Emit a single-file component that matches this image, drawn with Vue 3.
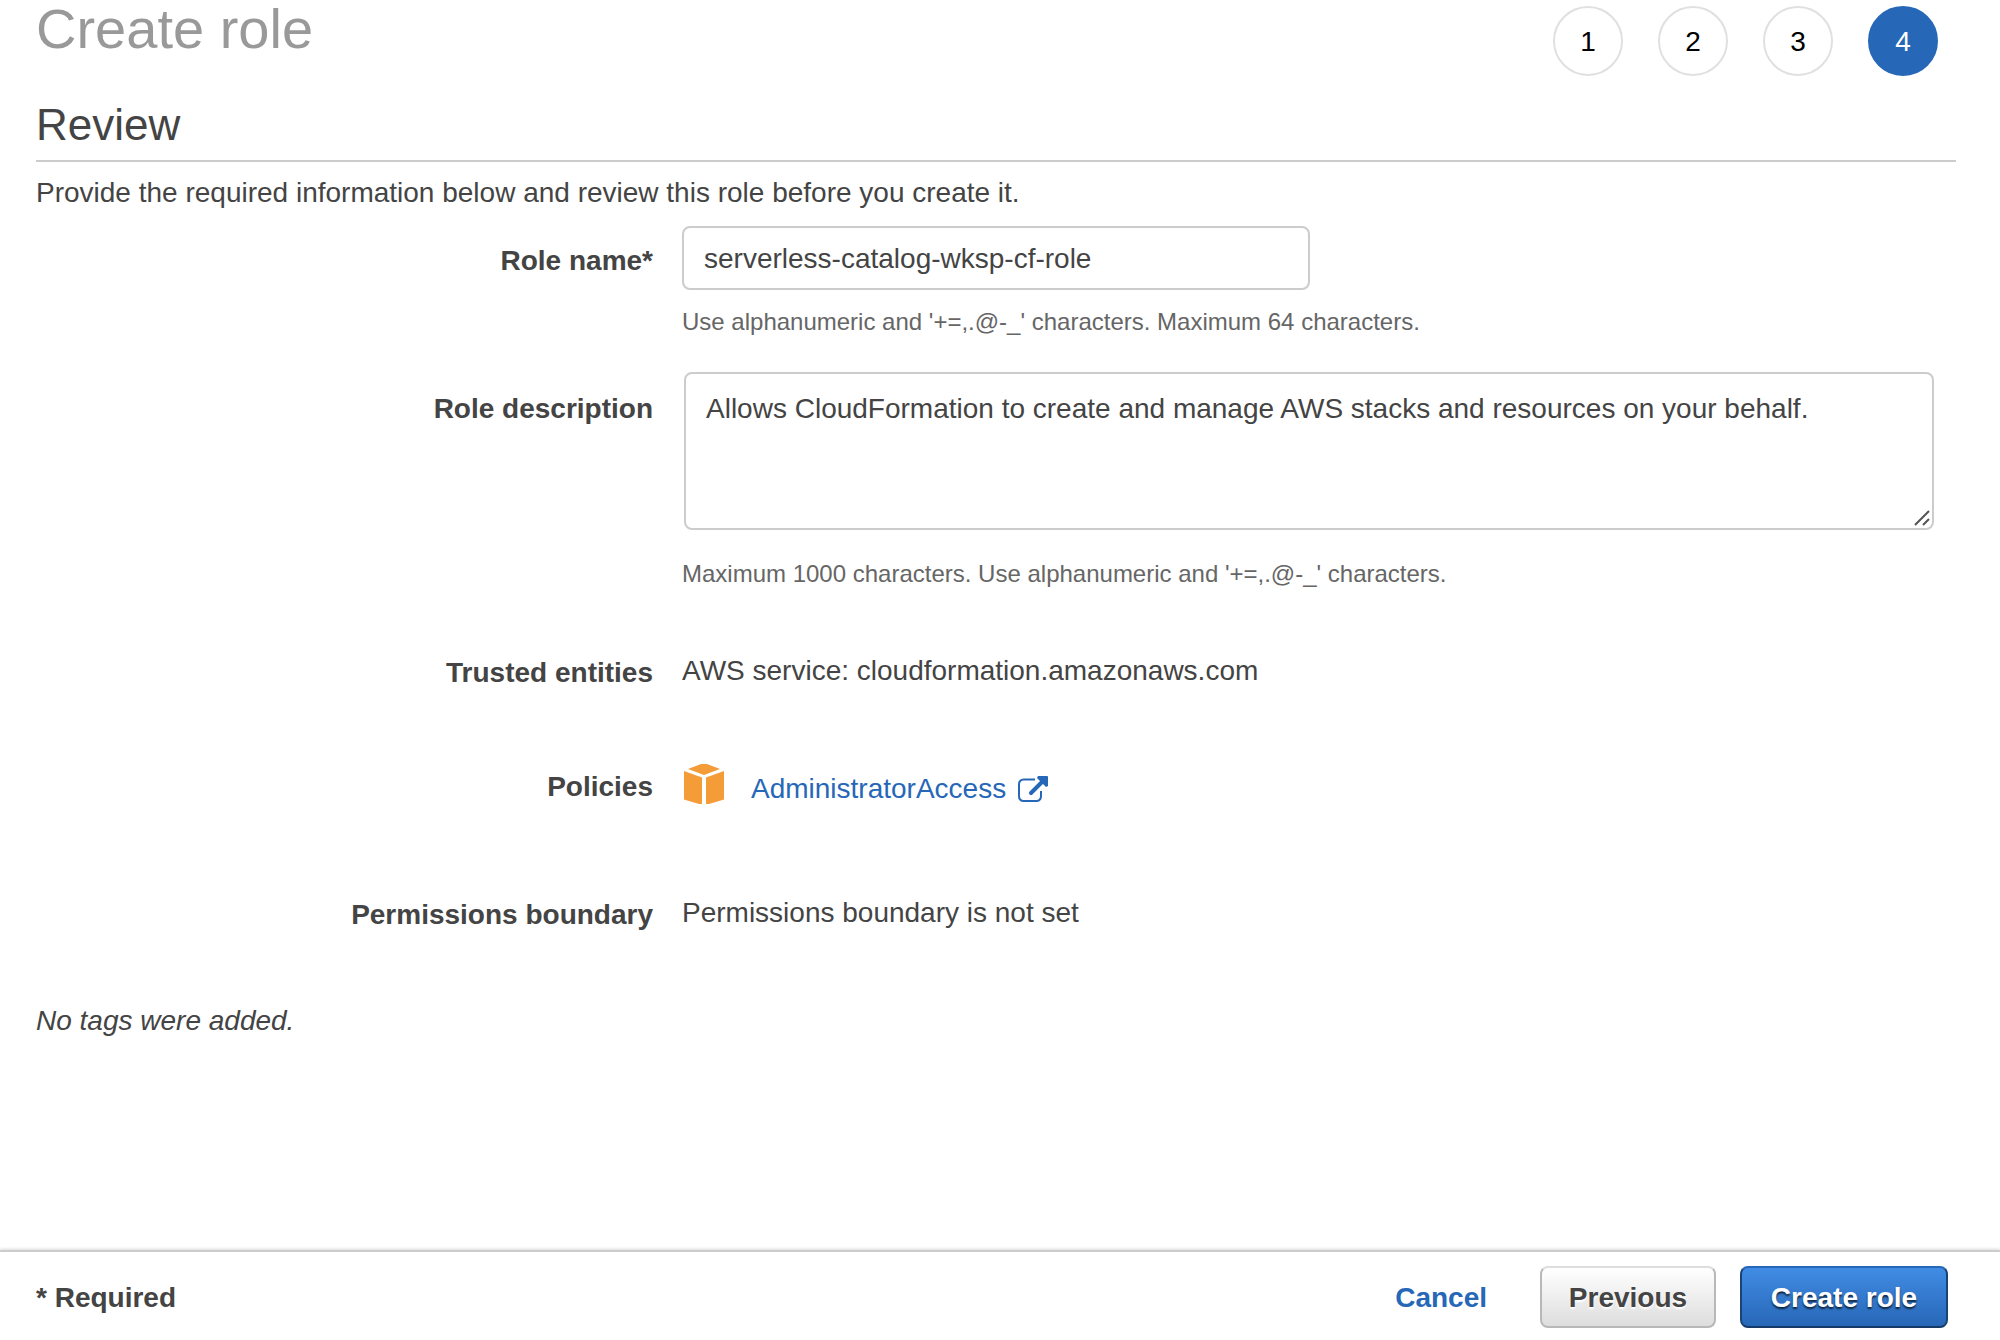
<script setup>
import { ref } from 'vue'

const steps = [1, 2, 3, 4]
const currentStep = ref(4)
const roleName = ref('serverless-catalog-wksp-cf-role')
const roleDescription = ref(
  'Allows CloudFormation to create and manage AWS stacks and resources on your behalf.'
)
</script>

<template>
  <form class="wizard" @submit.prevent>
    <main class="content">
      <header class="header">
        <h1 class="title">Create role</h1>
        <ol class="steps">
          <li
            v-for="step in steps"
            :key="step"
            class="step"
            :class="{ active: step === currentStep }"
            :aria-current="step === currentStep ? 'step' : undefined"
          >{{ step }}</li>
        </ol>
      </header>

      <h2 class="subtitle">Review</h2>
      <p class="intro">Provide the required information below and review this role before you create it.</p>

      <div class="row row-name">
        <label class="label" for="role-name">Role name*</label>
        <div class="value">
          <input id="role-name" v-model="roleName" class="field" type="text" aria-describedby="name-help" />
          <p id="name-help" class="help">Use alphanumeric and '+=,.@-_' characters. Maximum 64 characters.</p>
        </div>
      </div>

      <div class="row row-description">
        <label class="label" for="role-description">Role description</label>
        <div class="value">
          <div class="area-box">
            <textarea id="role-description" v-model="roleDescription" class="field area" aria-describedby="description-help"></textarea>
            <svg class="grip" viewBox="0 0 16 16" aria-hidden="true">
              <path d="M1 15 15 1M9 15 15 9" fill="none" stroke="#555" stroke-width="2" />
            </svg>
          </div>
          <p id="description-help" class="help help-area">Maximum 1000 characters. Use alphanumeric and '+=,.@-_' characters.</p>
        </div>
      </div>

      <div class="row row-trusted">
        <span class="label">Trusted entities</span>
        <span class="value">AWS service: cloudformation.amazonaws.com</span>
      </div>

      <div class="row row-policies">
        <span class="label">Policies</span>
        <div class="value policy">
          <svg class="cube" viewBox="0 0 40 40" aria-hidden="true">
            <path d="M17 0H23L36 5 20 11 4 5Z" />
            <path d="M0 7 18 13.500V40H15L0 35.500Z" />
            <path d="M40 7 22 13.500V40H25L40 35.500Z" />
          </svg>
          <a class="link policy-link" href="#">
            AdministratorAccess
            <svg class="external" viewBox="0 0 30 26" aria-hidden="true">
              <path d="M17 3.500H5.500a4.500 4.500 0 0 0-4.500 4.500V20.500A4.500 4.500 0 0 0 5.500 25H18.500A4.500 4.500 0 0 0 23 20.500V15" fill="none" stroke="currentColor" stroke-width="2" />
              <path d="M13 17 25 5" fill="none" stroke="currentColor" stroke-width="4" stroke-linecap="round" />
              <path d="M20 0H29Q30 0 30 1V10L28 11 19 2Z" fill="currentColor" />
            </svg>
          </a>
        </div>
      </div>

      <div class="row row-boundary">
        <span class="label">Permissions boundary</span>
        <span class="value">Permissions boundary is not set</span>
      </div>

      <p class="tags">No tags were added.</p>
    </main>

    <footer class="footer">
      <strong class="required">* Required</strong>
      <a class="link cancel" href="#">Cancel</a>
      <button class="button" type="button">Previous</button>
      <button class="button primary" type="submit">Create role</button>
    </footer>
  </form>
</template>

<style>
body {
  margin: 0;
  background: #fff;
}
</style>

<style scoped>
.wizard {
  display: flex;
  flex-direction: column;
  min-height: 100vh;
  color: #444;
  font-family: "Liberation Sans", Arial, sans-serif;
  font-size: 28px;
  line-height: 38px;
}

.wizard *,
.wizard {
  box-sizing: border-box;
}

.content {
  flex: 1;
  padding: 0 44px 40px 36px;
}

.header {
  display: flex;
  justify-content: space-between;
  align-items: flex-start;
}

.title {
  margin: 0;
  color: #999;
  font-size: 56px;
  font-weight: 400;
  line-height: 58px;
}

.steps {
  display: flex;
  gap: 35px;
  margin: 6px 18px 0 0;
  padding: 0;
  list-style: none;
}

.step {
  display: flex;
  align-items: center;
  justify-content: center;
  width: 70px;
  height: 70px;
  padding-top: 2px;
  border: 2px solid #e0e0e0;
  border-radius: 50%;
  color: #000;
}

.step.active {
  border-color: #2767b7;
  background: #2767b7;
  color: #fff;
}

.subtitle {
  margin: 23px 0 12px;
  padding-bottom: 9px;
  border-bottom: 2px solid #ccc;
  font-size: 44px;
  font-weight: 400;
  line-height: 52px;
}

.intro {
  margin: 0;
}

.row {
  display: grid;
  grid-template-columns: 617fr 1274fr;
  column-gap: 29px;
  align-items: start;
}

.label {
  padding-top: 2px;
  font-weight: 700;
  text-align: right;
}

.row-name {
  margin-top: 14px;
}

.row-name .label {
  padding-top: 16px;
}

.row-description {
  margin-top: 34px;
}

.row-description .label {
  padding-top: 18px;
}

.row-trusted {
  margin-top: 62px;
}

.row-policies {
  margin-top: 72px;
}

.row-policies .label {
  padding-top: 4px;
}

.row-boundary {
  margin-top: 86px;
}

.field {
  display: block;
  width: 628px;
  max-width: 100%;
  height: 64px;
  padding: 2px 20px 0;
  border: 2px solid #ccc;
  border-radius: 8px;
  background: #fff;
  color: #444;
  font: inherit;
}

.area-box {
  position: relative;
  margin: 0 22px 0 2px;
}

.area {
  width: 100%;
  height: 158px;
  padding: 16px 20px;
  resize: none;
}

.grip {
  position: absolute;
  right: 4px;
  bottom: 4px;
  width: 16px;
  height: 16px;
  pointer-events: none;
}

.help {
  margin: 16px 0 0;
  color: #666;
  font-size: 24px;
  line-height: 32px;
}

.help-area {
  margin-top: 28px;
}

.policy {
  display: flex;
  align-items: flex-start;
  gap: 27px;
  padding-left: 2px;
}

.cube {
  width: 40px;
  height: 40px;
  fill: #f39c38;
}

.link {
  color: #2767b7;
  text-decoration: none;
}

.policy-link {
  display: flex;
  align-items: center;
  gap: 12px;
  padding-top: 6px;
}

.external {
  width: 30px;
  height: 26px;
}

.tags {
  margin: 68px 0 0;
  font-style: italic;
}

.footer {
  display: flex;
  align-items: center;
  gap: 24px;
  padding: 14px 52px 12px 36px;
  border-top: 2px solid #ccc;
  box-shadow: 0 -1px 3px rgba(0, 0, 0, 0.15);
}

.required {
  margin-right: auto;
  padding-top: 2px;
}

.cancel {
  margin-right: 29px;
  padding-top: 2px;
  font-weight: 700;
}

.button {
  width: 176px;
  height: 62px;
  padding: 2px 0 0;
  border: 2px solid #b8b8b8;
  border-top-color: #dedede;
  border-radius: 8px;
  background: linear-gradient(#fff, #ddd);
  color: #444;
  font: inherit;
  font-weight: 700;
  text-shadow: 0 2px 2px #fff;
}

.button.primary {
  width: 208px;
  border-color: #2767b7 #1a4478 #163a68;
  background: linear-gradient(#418ce4, #2767b7);
  color: #fff;
  text-shadow: 0 2px 2px rgba(0, 0, 0, 0.7);
}
</style>
